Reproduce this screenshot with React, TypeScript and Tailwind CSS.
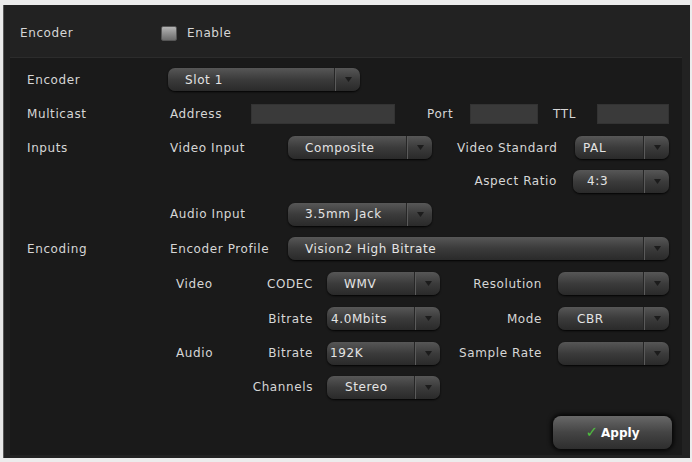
import React from "react";

const font = { fontFamily: '"DejaVu Sans", Verdana, sans-serif' };

const Label = ({ children, className = "" }: { children: React.ReactNode; className?: string }) => (
  <span className={`text-[12px] tracking-[0.6px] text-[#d6d6d6] whitespace-nowrap ${className}`}>{children}</span>
);

const Select = ({
  value,
  className = "",
  pad = "pl-[17px]",
}: {
  value?: string;
  className?: string;
  pad?: string;
}) => (
  <div
    className={`flex h-[23px] items-stretch rounded-[7px] bg-gradient-to-b from-[#575757] via-[#3b3b3b] to-[#2a2a2a] shadow-[0_1px_2px_rgba(0,0,0,0.9)] ${className}`}
  >
    <div className={`flex flex-1 items-center ${pad}`}>
      <span className="text-[12px] tracking-[0.6px] text-[#e4e4e4] whitespace-nowrap">{value}</span>
    </div>
    <div className="w-px bg-[#262626]" />
    <div className="w-px bg-[#5a5a5a]" />
    <div className="flex w-[24px] items-center justify-center">
      <svg width="7" height="5" viewBox="0 0 7 5">
        <path d="M0 0 L7 0 L3.5 5 Z" fill="#1c1c1c" />
      </svg>
    </div>
  </div>
);

const Field = ({ className = "" }: { className?: string }) => (
  <div className={`h-[20px] bg-[#3a3a3a] border border-[#333] ${className}`} />
);

export default function App() {
  return (
    <div className="w-[692px] h-[462px] bg-[#ececec] pt-[5px] pb-[4px] pl-[3px] pr-[2px]" style={font}>
      <div className="h-[453px] bg-[#222222] border-l border-[#5a5a5a] flex flex-col">
        <div className="flex h-[52px] items-center pl-[16px] pt-[4px]">
          <Label className="w-[141px]">Encoder</Label>
          <div className="h-[15px] w-[16px] rounded-[2px] bg-gradient-to-b from-[#b4b4b4] to-[#6c6c6c] border border-[#555]" />
          <Label className="ml-[10px]">Enable</Label>
        </div>
        <div className="ml-[6px] mr-[8px] h-[398px] bg-[#1a1a1a] border-t border-[#2c2c2c] pl-[17px] pr-[13px] pt-[4px] flex flex-col">
          {/* Encoder */}
          <div className="flex h-[35px] items-center">
            <Label className="w-[141px]">Encoder</Label>
            <Select value="Slot 1" className="w-[192px]" />
          </div>
          {/* Multicast */}
          <div className="flex h-[33px] items-center">
            <Label className="w-[143px]">Multicast</Label>
            <Label className="w-[81px]">Address</Label>
            <Field className="w-[144px]" />
            <Label className="ml-[32px] w-[43px]">Port</Label>
            <Field className="w-[68px]" />
            <Label className="ml-[15px] w-[44px]">TTL</Label>
            <Field className="w-[72px]" />
          </div>
          {/* Inputs */}
          <div className="flex h-[35px] items-center">
            <Label className="w-[143px]">Inputs</Label>
            <Label className="w-[118px]">Video Input</Label>
            <Select value="Composite" className="w-[144px]" />
            <Label className="ml-[25px] w-[118px]">Video Standard</Label>
            <Select value="PAL" className="w-[94px]" pad="pl-[8px]" />
          </div>
          <div className="flex h-[32px] items-center justify-end">
            <Label className="mr-[16px]">Aspect Ratio</Label>
            <Select value="4:3" className="w-[96px]" pad="pl-[14px]" />
          </div>
          <div className="flex h-[34px] items-center">
            <div className="w-[143px]" />
            <Label className="w-[118px]">Audio Input</Label>
            <Select value="3.5mm Jack" className="w-[144px]" pad="pl-[17px]" />
          </div>
          {/* Encoding */}
          <div className="flex h-[35px] items-center">
            <Label className="w-[143px]">Encoding</Label>
            <Label className="w-[118px]">Encoder Profile</Label>
            <Select value="Vision2 High Bitrate" className="flex-1" />
          </div>
          <div className="flex h-[35px] items-center">
            <div className="w-[141px]" />
            <div className="flex w-[159px] justify-between pl-[8px] pr-[14px]">
              <Label>Video</Label>
              <Label>CODEC</Label>
            </div>
            <Select value="WMV" className="w-[113px]" />
            <div className="flex w-[118px] justify-end pr-[16px]">
              <Label>Resolution</Label>
            </div>
            <Select className="w-[111px]" />
          </div>
          <div className="flex h-[35px] items-center">
            <div className="w-[141px]" />
            <div className="flex w-[159px] justify-end pr-[14px]">
              <Label>Bitrate</Label>
            </div>
            <Select value="4.0Mbits" className="w-[113px]" pad="pl-[4px]" />
            <div className="flex w-[118px] justify-end pr-[16px]">
              <Label>Mode</Label>
            </div>
            <Select value="CBR" className="w-[111px]" pad="pl-[19px]" />
          </div>
          <div className="flex h-[34px] items-center">
            <div className="w-[141px]" />
            <div className="flex w-[159px] justify-between pl-[8px] pr-[14px]">
              <Label>Audio</Label>
              <Label>Bitrate</Label>
            </div>
            <Select value="192K" className="w-[113px]" pad="pl-[3px]" />
            <div className="flex w-[118px] justify-end pr-[16px]">
              <Label>Sample Rate</Label>
            </div>
            <Select className="w-[111px]" />
          </div>
          <div className="flex h-[34px] items-center">
            <div className="w-[141px]" />
            <div className="flex w-[159px] justify-end pr-[14px]">
              <Label>Channels</Label>
            </div>
            <Select value="Stereo" className="w-[113px]" pad="pl-[18px]" />
          </div>
          <div className="mt-[12px] flex justify-end mr-[-3px]">
            <button className="flex h-[33px] w-[119px] items-center justify-center gap-[3px] rounded-[8px] bg-gradient-to-b from-[#686868] via-[#444444] to-[#2e2e2e] shadow-[0_0_4px_2px_rgba(0,0,0,0.8)]">
              <span className="text-[15px] font-bold leading-none text-[#4fbf3f]">✓</span>
              <span className="text-[12px] font-bold text-white">Apply</span>
            </button>
          </div>
        </div>
      </div>
    </div>
  );
}
